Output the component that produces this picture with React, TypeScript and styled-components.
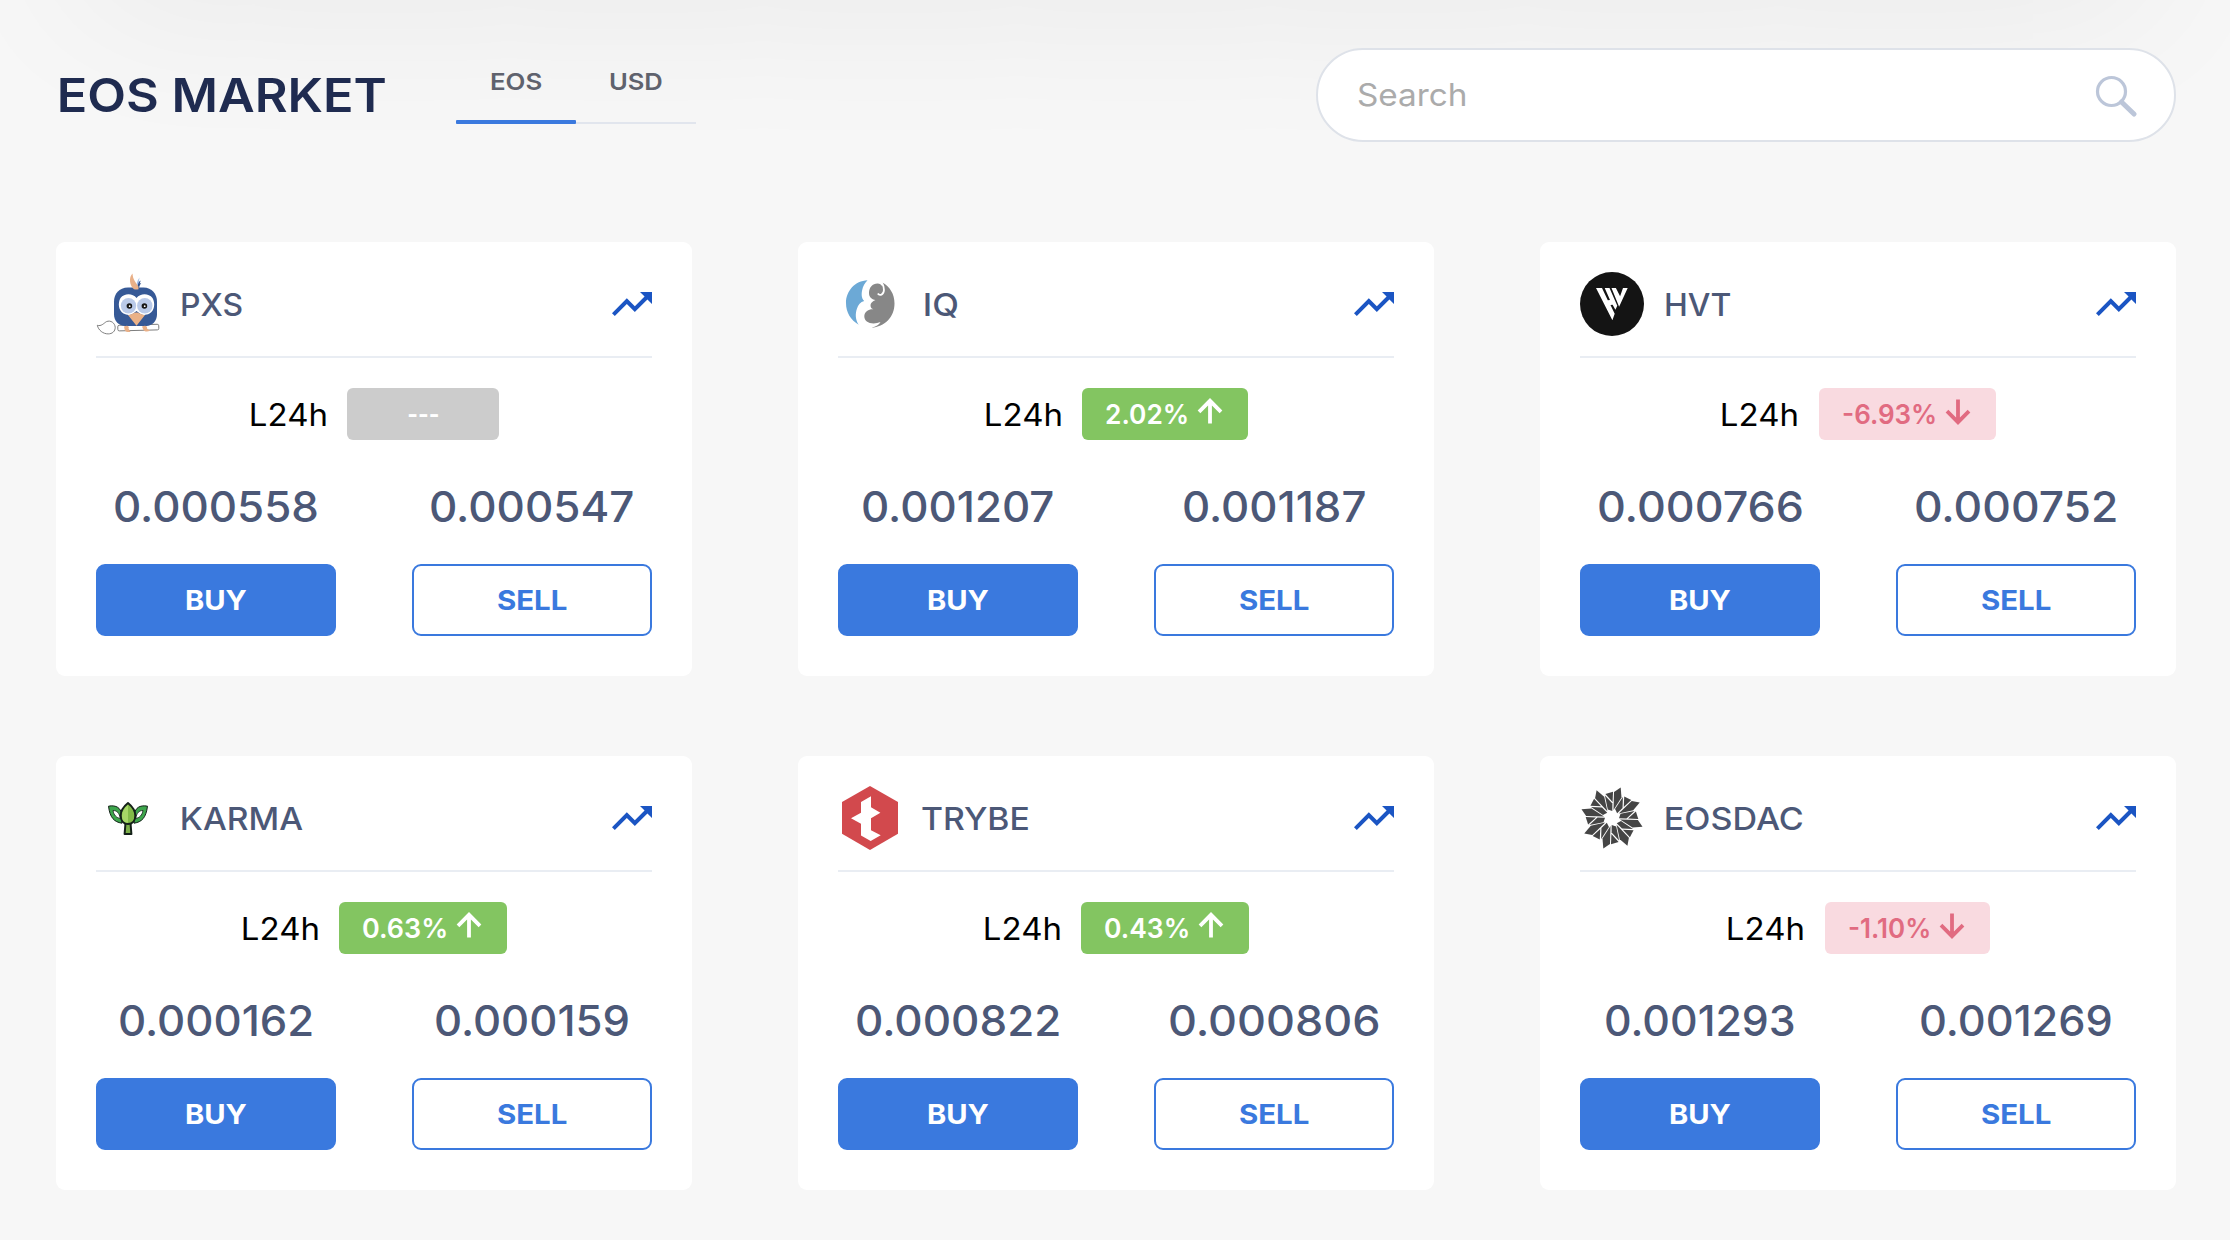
import React, { useLayoutEffect, useRef } from 'react';
import styled, { createGlobalStyle } from 'styled-components';

const GlobalStyle = createGlobalStyle`
  * { box-sizing: border-box; }
  body {
    margin: 0;
    background: #f7f7f7;
    font-family: Inter, "Liberation Sans", sans-serif;
  }
`;

/* ---------- text fitted to an exact visible width ---------- */

const FitBox = styled.span`
  display: inline-flex;
  flex: none;
  white-space: pre;
`;

const FitInk = styled.span`
  display: inline-block;
  transform-origin: 0 50%;
`;

function Fit({ width, children }: { width: number; children: string }) {
  const ref = useRef<HTMLSpanElement>(null);
  useLayoutEffect(() => {
    const el = ref.current;
    const ctx = document.createElement('canvas').getContext('2d');
    if (!el || !ctx) return;
    const cs = getComputedStyle(el);
    ctx.font = `${cs.fontWeight} ${cs.fontSize} ${cs.fontFamily}`;
    const m = ctx.measureText(children);
    const ink = m.actualBoundingBoxLeft + m.actualBoundingBoxRight;
    const scale = width / ink;
    el.style.transform = `translateX(${m.actualBoundingBoxLeft * scale}px) scaleX(${scale})`;
  }, [children, width]);
  return (
    <FitBox style={{ width }}>
      <FitInk ref={ref}>{children}</FitInk>
    </FitBox>
  );
}

/* ---------- page ---------- */

const Page = styled.main`
  position: relative;
  overflow: hidden;
  width: 2230px;
  height: 1240px;
  padding: 48px 54px 50px 56px;
  background: #f7f7f7;

  &::before {
    content: '';
    position: absolute;
    top: -300px;
    left: 80px;
    right: 80px;
    height: 300px;
    box-shadow: 0 2px 170px rgba(0, 0, 0, 0.066);
  }
`;

const TopBar = styled.header`
  position: relative;
  display: flex;
  align-items: flex-start;
  height: 194px;
`;

const Title = styled.h1`
  display: flex;
  align-items: center;
  width: 400px;
  height: 94px;
  margin: 0;
  padding-left: 4px;
  color: #1f2b50;
  font-size: 46.4px;
  font-weight: 600;
  line-height: 1;
`;

const Tabs = styled.nav`
  display: flex;
  height: 76px;
`;

const Tab = styled.button<{ $active?: boolean }>`
  display: flex;
  justify-content: center;
  align-items: flex-end;
  position: relative;
  width: 120px;
  padding: 0 0 17px;
  border: 0;
  border-bottom: 2px solid #e1e5ed;
  background: none;
  color: #5f626d;
  font: 600 23.2px/46px Inter, sans-serif;

  ${(p) =>
    p.$active &&
    `&::after {
      content: '';
      position: absolute;
      left: 0;
      right: 0;
      bottom: -2px;
      height: 4px;
      border-radius: 1px;
      background: #3a79de;
    }`}
`;

const SearchBox = styled.label`
  display: flex;
  justify-content: space-between;
  align-items: center;
  width: 860px;
  height: 94px;
  margin-left: auto;
  padding: 0 37px 2px 40px;
  border: 2px solid #dee2e9;
  border-radius: 47px;
  background: #fff;
  color: #ababab;
  font-size: 31px;
  line-height: 1;
`;

const SearchIcon = styled.svg`
  width: 42px;
  height: 42px;
  margin-top: 3px;
  fill: none;
  stroke: #bcc6d9;
`;

const Grid = styled.section`
  position: relative;
  display: grid;
  grid-template-columns: repeat(3, 636px);
  grid-auto-rows: 434px;
  gap: 80px 106px;
`;

/* ---------- card ---------- */

const Card = styled.article`
  display: flex;
  flex-direction: column;
  padding: 30px 40px 40px;
  border-radius: 9px;
  background: #fff;
`;

const CardHead = styled.div`
  display: flex;
  align-items: flex-start;
  height: 86px;
  border-bottom: 2px solid #e9edf3;
`;

const Name = styled.h2<{ $gap: number }>`
  display: flex;
  align-items: center;
  height: 65px;
  margin: 0 auto 0 ${(p) => p.$gap}px;
  color: #4c5877;
  font-size: 31px;
  font-weight: 500;
  line-height: 1;
`;

const Logo = styled.svg`
  flex: none;
  width: 64px;
  height: 64px;
`;

const TrendIcon = styled.svg`
  flex: none;
  width: 48px;
  height: 48px;
  margin: 8px -4px 0 0;
  fill: #1b55c3;
`;

const ChangeRow = styled.div`
  display: flex;
  justify-content: center;
  align-items: center;
  gap: 22px;
  margin-top: 30px;
  padding-left: 2px;
  height: 52px;
  color: #000;
  font-size: 31px;
  line-height: 1;
`;

type Tone = 'up' | 'down' | 'flat';

const toneColors: Record<Tone, [string, string]> = {
  up: ['#83c561', '#ffffff'],
  down: ['#f9dae0', '#e16b81'],
  flat: ['#cccccc', '#ffffff'],
};

const Badge = styled.span<{ $tone: Tone }>`
  display: flex;
  justify-content: center;
  align-items: center;
  gap: 10px;
  min-width: 152px;
  height: 52px;
  padding: 2px 25px 0 24px;
  border-radius: 6px;
  background: ${(p) => toneColors[p.$tone][0]};
  color: ${(p) => toneColors[p.$tone][1]};
  font-size: 27.2px;
  font-weight: 600;
`;

const ArrowIcon = styled.svg<{ $down?: boolean }>`
  width: 26px;
  height: 26px;
  margin-top: -8px;
  fill: none;
  stroke: currentColor;
  stroke-width: 3.8;
  ${(p) => p.$down && 'transform: rotate(180deg) translateY(-1px);'}
`;

const Trade = styled.div`
  display: flex;
  justify-content: space-between;
  margin-top: 34px;
`;

const Side = styled.div`
  display: flex;
  flex-direction: column;
  align-items: center;
  width: 240px;
`;

const Price = styled.div`
  display: flex;
  align-items: center;
  height: 64px;
  margin-bottom: 26px;
  padding-top: 2px;
  color: #4c5877;
  font-size: 42.6px;
  font-weight: 500;
  line-height: 1;
`;

const TradeButton = styled.button<{ $solid?: boolean }>`
  display: flex;
  justify-content: center;
  align-items: center;
  width: 240px;
  height: 72px;
  padding: 2px 0 0;
  border: 2px solid #3a79de;
  border-radius: 9px;
  background: ${(p) => (p.$solid ? '#3a79de' : '#fff')};
  color: ${(p) => (p.$solid ? '#fff' : '#3a79de')};
  font: 700 27.2px/1 Inter, sans-serif;
`;

/* ---------- token logos ---------- */

const PxsLogo = () => (
  <Logo viewBox="0 0 64 64">
    <g fill="none" stroke="#707070" strokeWidth=".9">
      <rect x="21.8" y="52.8" width="41" height="5.6" rx="1.5" transform="rotate(-1.5 42 56)" fill="#fff" />
      <path d="M1.3 53.3c4 1.2 6.200-1.800 9-3.600 4.500-2 8.700 1.500 8.900 5.600.1 4-3 6.600-7 6.600-5.200 0-9.700-3.600-10.900-8.600z" />
    </g>
    <path d="M40.500 16.500c-.5-4 .5-8 3-11-.5 3-.5 5-.8 8z" fill="#a9c2e8" />
    <path d="M41.500 16.500c0-4 1-7 3.200-8l-1 3 1.500-.5c-1.500 2-2 3.500-2.200 5.500z" fill="#2e4f8c" />
    <path d="M32 15.500h15.500c8.500 0 13.500 6.500 13.500 14v13c0 6.500-5 11.500-10.500 11.500H29c-6 0-11-5-11-11.500v-13c0-7.500 5-14 14-14z" fill="#365996" />
    <path d="M42.500 17.200c-1.500.5-3 .5-4.500 0-4.500-3.700-5.500-11.700-1.500-15.700.3 6 3 8.500 6 13z" fill="#e9b088" />
    <path d="M40.500 26c4-5 12-5 16 0 3 5 2 13-3 15.500-4 2-7 1.500-9 .5l-4-3-4 3c-3 1.500-6 1-9-.5-5-3-6-10-3-15.500 4-5 12-5 16 0z" fill="#fff" />
    <circle cx="32.500" cy="33.800" r="7.700" fill="#bacae9" />
    <circle cx="48.800" cy="33.800" r="7.700" fill="#bacae9" />
    <circle cx="33.400" cy="34" r="2.800" fill="#171717" />
    <circle cx="48.400" cy="34" r="2.800" fill="#171717" />
    <circle cx="33.700" cy="34.200" r=".9" fill="#fff" />
    <circle cx="48.700" cy="34.200" r=".9" fill="#fff" />
    <path d="M32 43c4 0 5-2.500 8.300-2.500S45 43 49 43l-8.500 10.700z" fill="#eab187" />
    <path d="M28 54.500c4-2 5.500 0 4.500 2l2 3.500c-3 .3-6-.3-6-3zM46 54.500c4-2 5.500 0 5 2l3 2.300c-3 1.500-6 .9-7-1.800z" fill="#e9b088" />
  </Logo>
);

const IqLogo = () => (
  <Logo viewBox="0 0 64 64">
    <path d="M29.500 8.300C17 8.800 8 19 8 31c0 9.500 4.700 17 12.700 21.800C17.500 48 17 42 19 36.500c1-3.800 3.500-6.500 7.200-7.600C23 26 23.500 21 24.200 18c.8-3.500 2.500-7 5.300-9.700z" fill="#6ca9d6" />
    <path d="M44.500 10.500C52 15 56.500 22 56.500 31.500C56.500 45 46.500 55 33.500 55.600C38 54.600 41 53 42.500 50C38 52 32 52 28.800 49.500C25 46 26 41 29 39C31 37.600 33 37.200 35.500 37.400C32 36.400 32 32.500 33.500 30.800C35 29 36 28.500 37.500 28C33.500 27.500 31 25 31 21C31 15.500 34.500 11.500 39.500 11.500C42 11.500 43 12.500 44 14z" fill="#878787" />
    <path d="M43.800 10.500C46.800 16 46.600 21 43.500 22.600C41.800 23.300 40.500 22.600 39.800 21.600" fill="none" stroke="#fff" strokeWidth="1.800" />
  </Logo>
);

const HvtLogo = () => (
  <Logo viewBox="0 0 64 64">
    <circle cx="32" cy="32" r="32" fill="#141414" />
    <path d="M16 16h6l5.800 12.300 2.200-.3-5.300-12h4.800l7.800 17.800-1.900 4-2.800-5-2.100.3 4.200 8.600-2.300 6.500zM31.500 16h4.400l4.200 8.200L43 16h4.700l-8.600 18.800z" fill="#fff" />
  </Logo>
);

const KarmaLogo = () => (
  <Logo viewBox="0 0 64 64">
    <g stroke="#142019" strokeLinejoin="round">
      <path d="M12.500 20.200c8-1.500 12 2 13 7.300l.5 9.700c-8-1.200-12-5.500-13.500-17zM51.500 20.200c-8-1.500-12 2-13 7.300l-.5 9.700c8-1.200 12-5.500 13.500-17z" fill="#3da64c" strokeWidth="1" />
      <path d="M17 24.500c4 0 6.500 2.500 7.200 8-3.600-.8-6.300-3-7.200-8zM47 24.500c-4 0-6.500 2.500-7.200 8 3.600-.8 6.300-3 7.200-8z" fill="#fff" strokeWidth=".8" />
      <path d="M29.500 37h5l.9 11h-6.800z" fill="#7daf4a" strokeWidth="2" />
      <path d="M32 17c4 3.200 7.300 7.500 7.300 12.800 0 5-3 8.200-7.300 8.200s-7.300-3.200-7.300-8.200C24.700 24.500 28 20.200 32 17z" fill="#83bb49" strokeWidth="2" />
    </g>
    <path d="M32 19c-3.500 3-6 6.500-6 11 0 4 2.300 6.800 6 6.800z" fill="#a7d767" />
  </Logo>
);

const TrybeLogo = () => (
  <Logo viewBox="0 0 64 64">
    <path d="M32 0l28 16v31.800L32 64 4 47.800V16z" fill="#d2494d" />
    <path d="M33 10.300v11l9.400 5.400L33 32.300v12l9.700 5-10 5.600-9.700-5.500V37.800l-10-5.500 10-5.500V16z" fill="#fff" />
  </Logo>
);

const EosdacLogo = () => (
  <Logo viewBox="0 0 64 64">
    <g transform="translate(32 32)" fill="#454545">
      {[0, 45, 90, 135, 180, 225, 270, 315].map((angle) => (
        <g key={angle} transform={`rotate(${angle})`}>
          <path d="M8.700-30.500L2-25.900 1.500-8 9.500-20.500z" />
          <path d="M-6.600-23.900L1-26.300.6-16z" />
          <path d="M-7.100-22.500L.4-14.500.3-7-4.200-8.500z" />
        </g>
      ))}
    </g>
  </Logo>
);

/* ---------- data ---------- */

type Sized = [string, number];

interface Token {
  name: Sized;
  gap: number;
  logo: React.FC;
  tone: Tone;
  change: Sized;
  buy: Sized;
  sell: Sized;
}

const tokens: Token[] = [
  { name: ['PXS', 60], gap: 21.5, logo: PxsLogo, tone: 'flat', change: ['---', 30], buy: ['0.000558', 202], sell: ['0.000547', 202] },
  { name: ['IQ', 33], gap: 22.5, logo: IqLogo, tone: 'up', change: ['2.02%', 81], buy: ['0.001207', 190], sell: ['0.001187', 181] },
  { name: ['HVT', 64], gap: 22, logo: HvtLogo, tone: 'down', change: ['-6.93%', 92], buy: ['0.000766', 203], sell: ['0.000752', 200] },
  { name: ['KARMA', 121], gap: 22, logo: KarmaLogo, tone: 'up', change: ['0.63%', 83], buy: ['0.000162', 192], sell: ['0.000159', 192] },
  { name: ['TRYBE', 106], gap: 19.5, logo: TrybeLogo, tone: 'up', change: ['0.43%', 83], buy: ['0.000822', 202], sell: ['0.000806', 208.5] },
  { name: ['EOSDAC', 137], gap: 22, logo: EosdacLogo, tone: 'down', change: ['-1.10%', 80], buy: ['0.001293', 188], sell: ['0.001269', 190] },
];

function TokenCard({ token }: { token: Token }) {
  const TokenLogo = token.logo;
  return (
    <Card>
      <CardHead>
        <TokenLogo />
        <Name $gap={token.gap}><Fit width={token.name[1]}>{token.name[0]}</Fit></Name>
        <TrendIcon viewBox="0 0 24 24">
          <path d="M16 6l2.290 2.290-4.880 4.880-4-4L2 16.590 3.410 18l6-6 4 4 6.300-6.290L22 12V6z" />
        </TrendIcon>
      </CardHead>
      <ChangeRow>
        <Fit width={74.5}>L24h</Fit>
        <Badge $tone={token.tone}>
          <Fit width={token.change[1]}>{token.change[0]}</Fit>
          {token.tone !== 'flat' && (
            <ArrowIcon viewBox="0 0 26 26" $down={token.tone === 'down'}>
              <path d="M13 25.500V3.500M2 13.800L13 2.800l11 11" />
            </ArrowIcon>
          )}
        </Badge>
      </ChangeRow>
      <Trade>
        <Side>
          <Price><Fit width={token.buy[1]}>{token.buy[0]}</Fit></Price>
          <TradeButton $solid><Fit width={61}>BUY</Fit></TradeButton>
        </Side>
        <Side>
          <Price><Fit width={token.sell[1]}>{token.sell[0]}</Fit></Price>
          <TradeButton><Fit width={69}>SELL</Fit></TradeButton>
        </Side>
      </Trade>
    </Card>
  );
}

export default function App() {
  return (
    <>
      <GlobalStyle />
      <Page>
        <TopBar>
          <Title><Fit width={325}>EOS MARKET</Fit></Title>
          <Tabs>
            <Tab $active><Fit width={50}>EOS</Fit></Tab>
            <Tab><Fit width={52}>USD</Fit></Tab>
          </Tabs>
          <SearchBox>
            <Fit width={107}>Search</Fit>
            <SearchIcon viewBox="0 0 42 42">
              <circle cx="16.500" cy="16.500" r="14" strokeWidth="3.200" />
              <path d="M26.500 27L39 39" strokeWidth="5" strokeLinecap="round" />
            </SearchIcon>
          </SearchBox>
        </TopBar>
        <Grid>
          {tokens.map((t) => (
            <TokenCard key={t.name[0]} token={t} />
          ))}
        </Grid>
      </Page>
    </>
  );
}
